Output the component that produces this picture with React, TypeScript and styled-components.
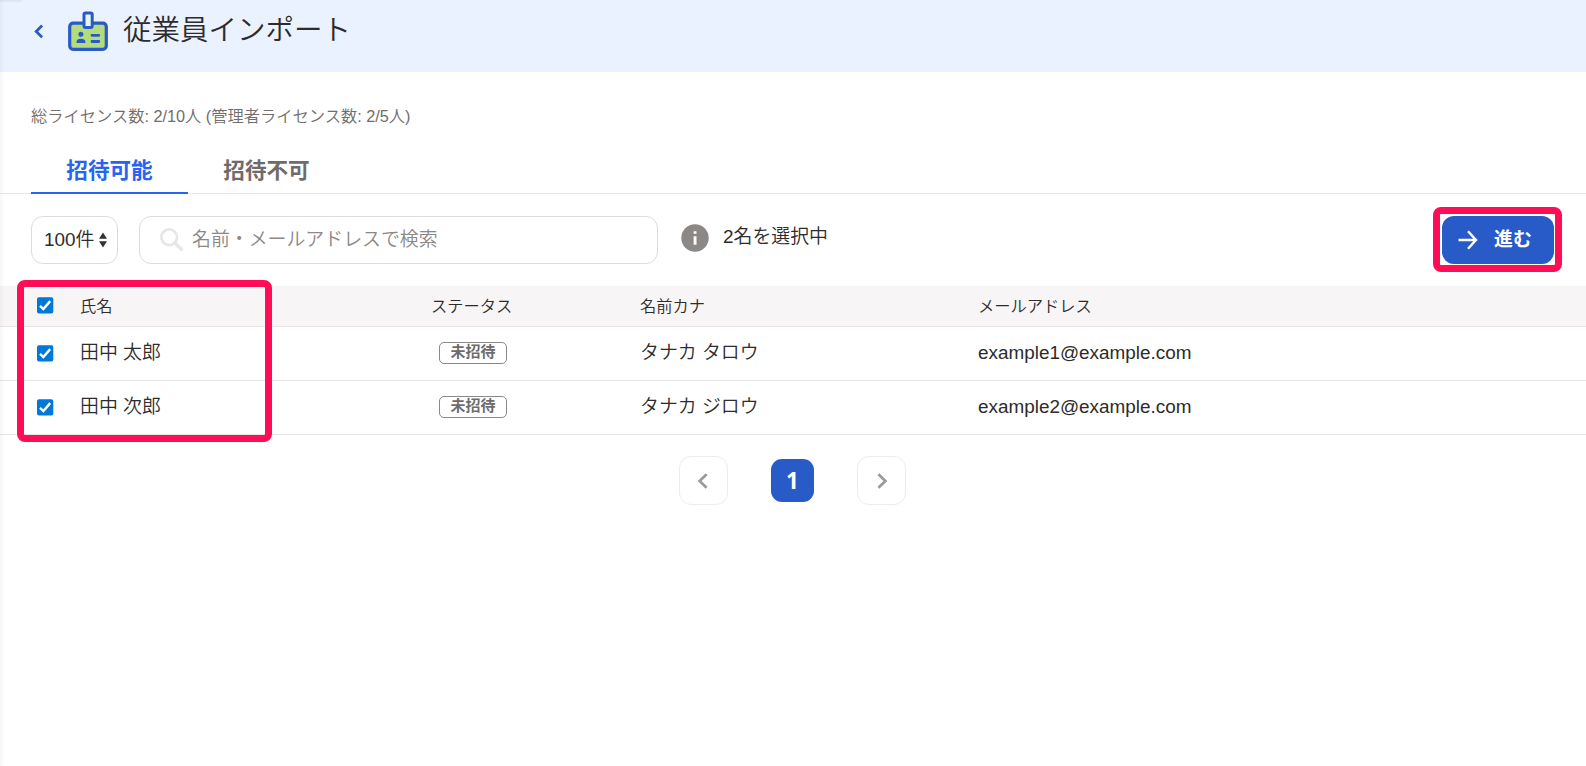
import React from 'react';
import styled, { createGlobalStyle, css } from 'styled-components';

const GlobalStyle = createGlobalStyle`
  *, *::before, *::after { box-sizing: border-box; }
  html, body { margin: 0; background: #fff; }
  body {
    font-family: "Liberation Sans", "Noto Sans CJK JP", sans-serif;
    font-size: 18.9px;
    font-weight: 350;
    color: #2d2b2b;
    overflow: hidden;
  }
`;

const Page = styled.div`
  position: relative;
  height: 766px;
  display: flex;
  flex-direction: column;
  background: #fff;
`;

const SideShadow = styled.div`
  position: absolute;
  left: 0;
  top: 0;
  width: 5px;
  height: 100%;
  background: linear-gradient(to right, rgba(0, 0, 0, 0.035), transparent);
`;

const CornerShadow = styled.div`
  position: absolute;
  left: 0;
  top: 0;
  width: 22px;
  height: 3px;
  background: linear-gradient(to bottom, rgba(0, 0, 0, 0.07), transparent);
`;

const Header = styled.header`
  flex: none;
  display: flex;
  align-items: flex-start;
  height: 72px;
  padding: 11px 0 0 34px;
  background: #eaf2ff;
`;

const BackLink = styled.a`
  display: flex;
  margin-top: 13px;
`;

const BadgeIcon = styled.svg`
  margin-left: 24px;
`;

const Title = styled.h1`
  margin: -1px 0 0 15px;
  font-size: 28.5px;
  line-height: 40px;
  font-weight: 350;
`;

const License = styled.p`
  margin: 34px 0 0 31px;
  height: 20px;
  line-height: 20px;
  font-size: 16.25px;
  color: #706d6b;
`;

const Tabs = styled.nav`
  display: flex;
  height: 42px;
  margin-top: 26px;
  padding-left: 31px;
  box-shadow: inset 0 -1px #e6e6e6;
`;

const Tab = styled.a<{ $active?: boolean }>`
  width: 157px;
  height: 42px;
  text-align: center;
  font-size: 21.6px;
  line-height: 38px;
  font-weight: 700;
  color: ${p => (p.$active ? '#2864f0' : '#6f6b6a')};
  ${p => p.$active && css`border-bottom: 2px solid #2864f0;`}
`;

const Toolbar = styled.div`
  display: flex;
  align-items: center;
  height: 92px;
  padding: 0 32px 0 31px;
`;

const fieldBox = css`
  display: flex;
  align-items: center;
  height: 48px;
  border: 1px solid #dcdcdc;
  border-radius: 12px;
  background: #fff;
`;

const PageSize = styled.div`
  ${fieldBox}
  width: 87px;
  padding-left: 12px;
  gap: 5px;
  white-space: nowrap;
`;

const SearchBox = styled.div`
  ${fieldBox}
  width: 519px;
  margin-left: 21px;
  padding-left: 20px;
  gap: 8px;
  color: #8b8886;
`;

const Selection = styled.div`
  display: flex;
  align-items: center;
  gap: 14px;
  margin: -5px auto 0 23px;
`;

const Proceed = styled.button`
  position: relative;
  display: flex;
  align-items: center;
  width: 112px;
  height: 48px;
  padding: 0 0 0 16px;
  gap: 16px;
  border: 0;
  border-radius: 12px;
  background: #285ac8;
  color: #fff;
  font: inherit;
  font-weight: 700;
`;

const Label = styled.span<{ $rise?: number }>`
  line-height: 26px;
  padding-bottom: ${p => p.$rise ?? 0}px;
`;

const Highlight = styled.div<{ $inset: string; $width?: string }>`
  position: absolute;
  inset: ${p => p.$inset};
  width: ${p => p.$width ?? 'auto'};
  border: 7px solid #ff0d57;
  border-radius: 8px;
  pointer-events: none;
`;

const Table = styled.div`
  position: relative;
`;

const Row = styled.div<{ $head?: boolean }>`
  display: grid;
  grid-template-columns: 43px 351px 209px 338px 1fr;
  align-items: center;
  height: ${p => (p.$head ? 41 : 54)}px;
  padding-left: 37px;
  padding-bottom: ${p => (p.$head ? 2 : 1)}px;
  border-bottom: 1px solid #e6e4e4;
  background: ${p => (p.$head ? '#f7f5f6' : '#fff')};
  font-size: ${p => (p.$head ? 16.25 : 18.9)}px;
`;

const Status = styled.span`
  width: 68px;
  height: 22px;
  margin-left: 8px;
  border: 1px solid #8b8886;
  border-radius: 5px;
  text-align: center;
  font-size: 15px;
  font-weight: 700;
  line-height: 18px;
  color: #6f6b6a;
`;

const Pager = styled.div`
  display: flex;
  justify-content: center;
  align-items: center;
  gap: 43px;
  margin-top: 21px;
  padding-right: 1px;
`;

const PageButton = styled.button<{ $current?: boolean }>`
  display: flex;
  align-items: center;
  justify-content: center;
  width: ${p => (p.$current ? 43 : 49)}px;
  height: ${p => (p.$current ? 43 : 49)}px;
  padding: 0;
  border: ${p => (p.$current ? '0' : '1px solid #ececec')};
  border-radius: ${p => (p.$current ? 11 : 12)}px;
  background: ${p => (p.$current ? '#285ac8' : '#fff')};
  color: #fff;
  font: 700 22.5px "Noto Sans", sans-serif;
`;

const Check = () => (
  <svg width="17" height="17" viewBox="0 0 17 17">
    <rect x="0" y="0.3" width="16.3" height="16.3" rx="2" fill="#0078d7" />
    <path d="M3 8.9 6.4 12.1 13.2 4.1" fill="none" stroke="#fff" strokeWidth="2.4" />
  </svg>
);

const Chevron = ({ right = false }: { right?: boolean }) => (
  <svg width="12" height="16" viewBox="0 0 12 16">
    <path d={right ? 'M2.4 1.2 9.4 8 2.4 14.8' : 'M8.6 1.2 1.6 8 8.6 14.8'} fill="none" stroke="#999" strokeWidth="2.7" />
  </svg>
);

const employees = [
  { name: '田中 太郎', kana: 'タナカ タロウ', email: 'example1@example.com' },
  { name: '田中 次郎', kana: 'タナカ ジロウ', email: 'example2@example.com' },
];

export default function App() {
  return (
    <Page>
      <GlobalStyle />
      <Header>
        <BackLink>
          <svg width="10" height="15" viewBox="0 0 10 15">
            <path d="M8.1 1.5 2.2 7.5 8.1 13.3" fill="none" stroke="#285ac8" strokeWidth="2.7" />
          </svg>
        </BackLink>
        <BadgeIcon width="40" height="40" viewBox="0 0 40 40">
          <rect x="1.7" y="12.2" width="36.6" height="26.1" rx="3.5" fill="#b4dc7d" stroke="#285ac8" strokeWidth="3.2" />
          <rect x="16" y="2" width="8.2" height="14.4" rx="1.5" fill="#ebf3e4" stroke="#285ac8" strokeWidth="3" />
          <circle cx="12.9" cy="23.3" r="2.5" fill="#285ac8" />
          <path d="M8.5 32v-1.1c0-2.2 1.7-3.2 4.4-3.2s4.5 1 4.5 3.2V32z" fill="#285ac8" />
          <path d="M24 24.3h6.8M24 30.5h6.8" stroke="#285ac8" strokeWidth="2.8" strokeLinecap="round" />
        </BadgeIcon>
        <Title>従業員インポート</Title>
      </Header>
      <License>総ライセンス数: 2/10人 (管理者ライセンス数: 2/5人)</License>
      <Tabs>
        <Tab $active>招待可能</Tab>
        <Tab>招待不可</Tab>
      </Tabs>
      <Toolbar>
        <PageSize>
          <Label $rise={1}>100件</Label>
          <svg width="8" height="16" viewBox="0 0 8 16">
            <path d="M0 6.7 4 .5l4 6.2zM0 9.3h8L4 15.5z" fill="#323232" />
          </svg>
        </PageSize>
        <SearchBox>
          <svg width="24" height="24" viewBox="0 0 24 24">
            <circle cx="9.2" cy="9.2" r="7.8" fill="none" stroke="#e6e6e6" strokeWidth="2.7" />
            <path d="M14.7 14.7 22.4 22.4" stroke="#e6e6e6" strokeWidth="3.4" />
          </svg>
          <Label $rise={1}>名前・メールアドレスで検索</Label>
        </SearchBox>
        <Selection>
          <svg width="28" height="28" viewBox="0 0 28 28">
            <circle cx="14" cy="14" r="13.7" fill="#8b8886" />
            <path d="M12.6 7.2h2.9v2.5h-2.9zM12.6 12.2h2.9v8.6h-2.9z" fill="#fff" />
          </svg>
          <Label $rise={2}>2名を選択中</Label>
        </Selection>
        <Proceed>
          <svg width="20" height="20" viewBox="0 0 20 20">
            <path d="M.5 10h17M10 1.2 18 10l-8 8.8" fill="none" stroke="#fff" strokeWidth="2.4" />
          </svg>
          <Label $rise={1}>進む</Label>
          <Highlight $inset="-9px -8px -8px -9px" />
        </Proceed>
      </Toolbar>
      <Table>
        <Row $head>
          <Check />
          <span>氏名</span>
          <span>ステータス</span>
          <span>名前カナ</span>
          <span>メールアドレス</span>
        </Row>
        {employees.map(e => (
          <Row key={e.email}>
            <Check />
            <Label $rise={1}>{e.name}</Label>
            <Status>未招待</Status>
            <Label $rise={1}>{e.kana}</Label>
            <span>{e.email}</span>
          </Row>
        ))}
        <Highlight $inset="-6px auto -7px 17px" $width="255px" />
      </Table>
      <Pager>
        <PageButton><Chevron /></PageButton>
        <PageButton $current>1</PageButton>
        <PageButton><Chevron right /></PageButton>
      </Pager>
      <SideShadow />
      <CornerShadow />
    </Page>
  );
}
